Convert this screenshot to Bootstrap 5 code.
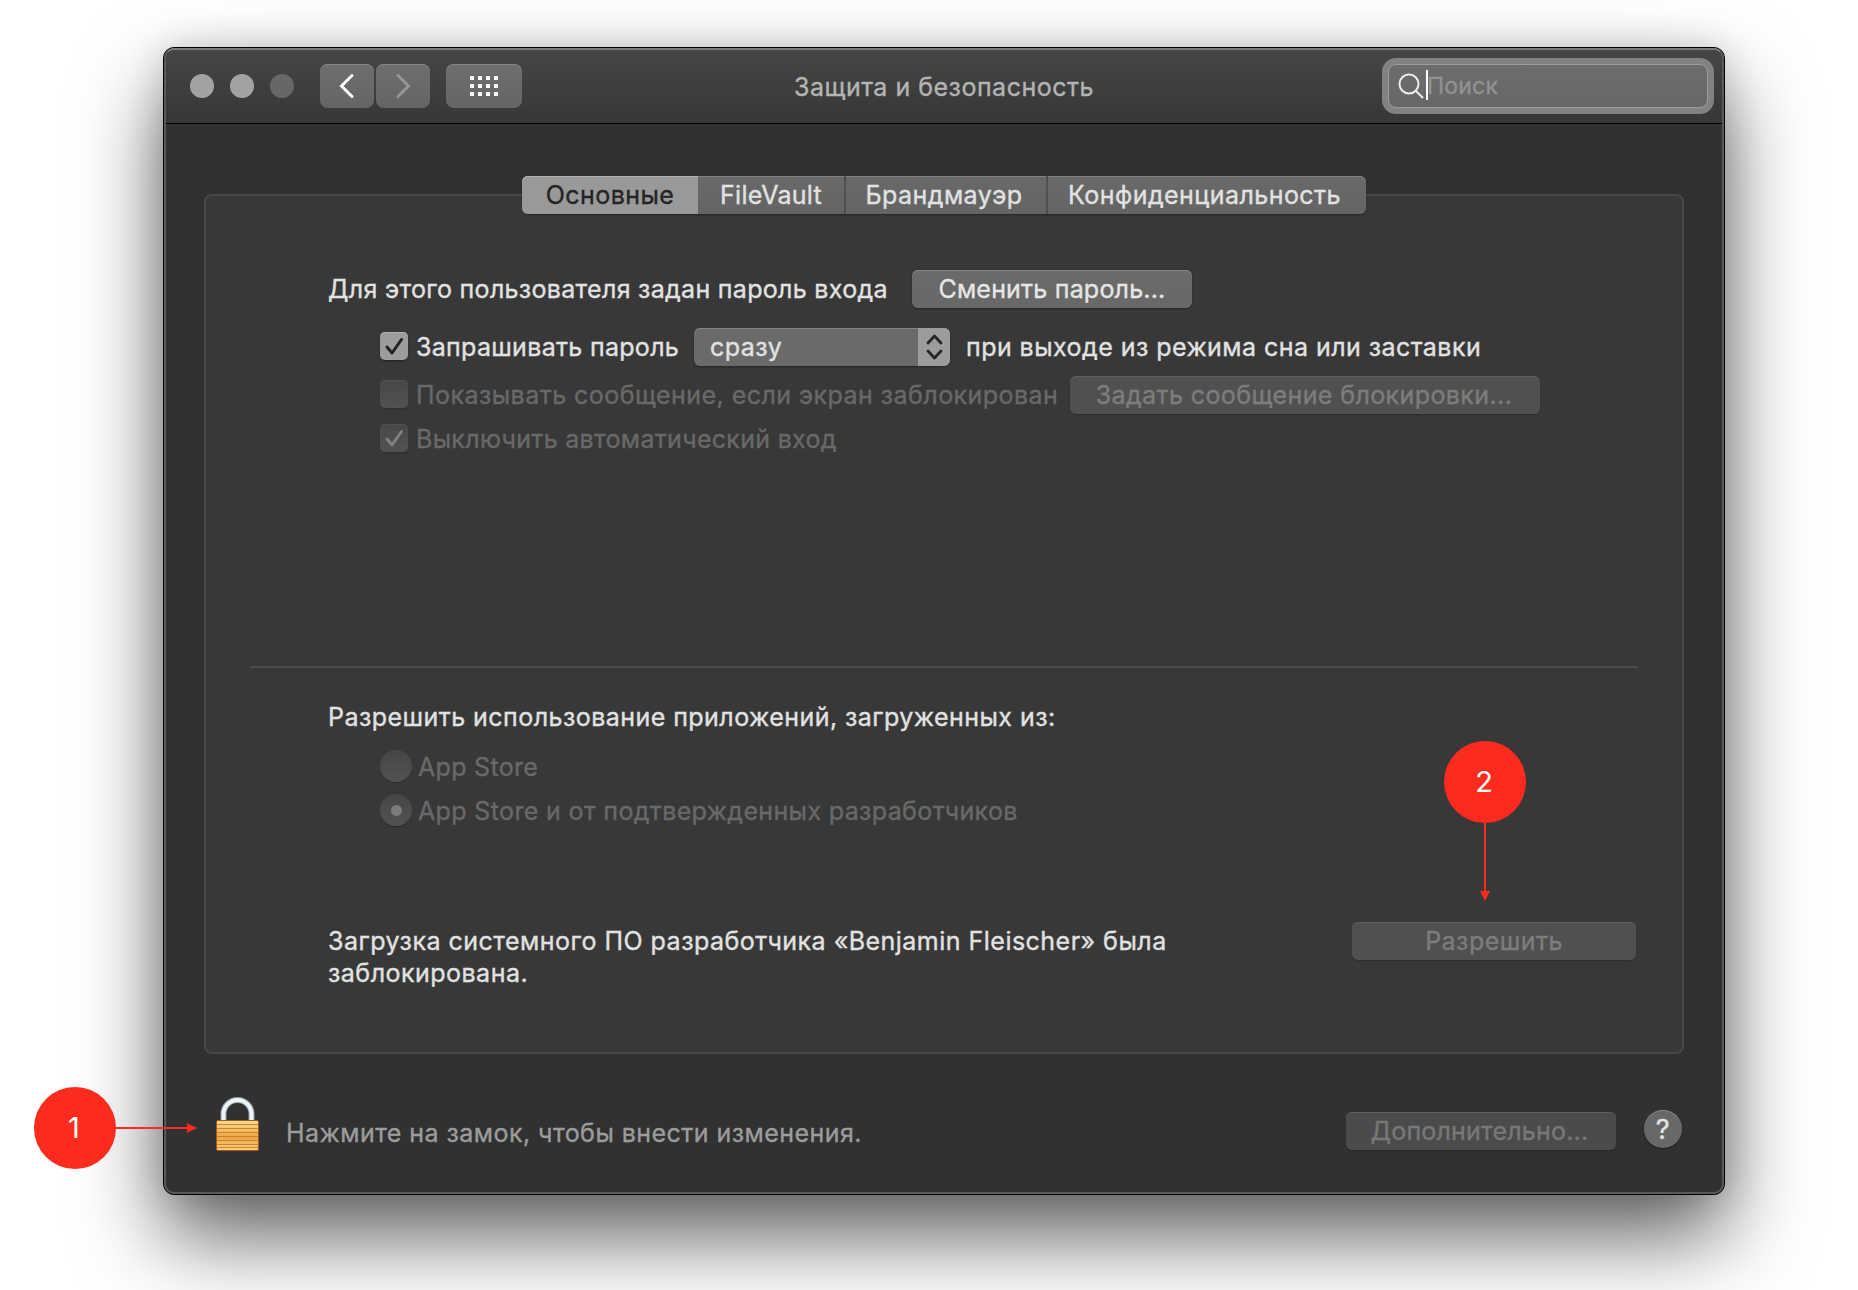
<!DOCTYPE html>
<html lang="ru">
<head>
<meta charset="utf-8">
<title>Защита и безопасность</title>
<link href="https://cdn.jsdelivr.net/npm/bootstrap@5.3.0/dist/css/bootstrap.min.css" rel="stylesheet">
<style>
html,body{width:1858px;height:1290px;overflow:hidden;background:#fff}
body{font-family:Inter,"Liberation Sans",sans-serif;font-size:25px;line-height:32px;color:#e2e2e2;letter-spacing:.45px;padding:47px 0 0 163px;position:relative;white-space:nowrap;-webkit-text-stroke:.35px}
svg{display:block}
.win{width:1562px;height:1148px;border:1px solid #000;border-radius:11px;background:#313131;position:relative;box-shadow:0 42px 84px rgba(0,0,0,.62),0 0 36px rgba(0,0,0,.14)}
.win::after{content:"";position:absolute;inset:0;border-radius:10px;border:2px solid #5a5a5a;border-top-color:#7b7b7b;pointer-events:none;z-index:3}
.titlebar{height:76px;background:linear-gradient(#464646,#373737);border-bottom:1px solid #000;border-radius:10px 10px 0 0;padding:10px 10px 10px 26px}
.side{width:480px}
.side.end{width:496px}
.dot{width:24px;height:24px;border-radius:50%;background:#a2a2a2}
.dot.off{background:#676767}
.tool{width:54px;height:44px;border-radius:8px;background:linear-gradient(#6e6e6e,#656565);box-shadow:inset 0 1px #858585;margin-left:2px}
.tool.first{margin-left:26px}
.tool.wide{width:76px;margin-left:16px}
.wtitle{color:#b4b4b4;padding-top:2px;letter-spacing:.5px}
.find{width:332px;height:56px;border-radius:14px;background:#828282;padding:6px}
.find>div{width:320px;height:44px;border:1px solid #9c9c9c;border-radius:8px;background:linear-gradient(#6d6d6d,#676767);padding-left:9px;color:#929292;font-size:23px;letter-spacing:.2px}
.caret{width:2px;height:30px;background:#fff;margin-left:2px;margin-top:-2px}
.find span{margin-left:-1px}
.panel{margin:70px 40px 0;height:860px;border:2px solid #474747;border-radius:8px;background:#383838}
.tabs{width:844px;height:38px;margin:-20px auto 0;border-radius:6px;background:linear-gradient(#696969,#646464);box-shadow:inset 0 1px #828282,0 1px 2px rgba(0,0,0,.35)}
.tabs>div{border-left:2px solid #505050;text-align:center;line-height:38px}
.tabs>div.on{border:0;width:176px;background:#999;color:#242424;border-radius:6px 0 0 6px;box-shadow:inset 0 1px #b2b2b2}
.tabs>.t2{width:146px;border-left:0;letter-spacing:.25px}
.tabs>.t3{width:202px;padding-right:4px}
.tabs>.t4{width:320px;padding-right:5px}
.pb{height:38px;line-height:38px;border-radius:6px;background:linear-gradient(#6a6a6a,#686868);box-shadow:inset 0 1px #838383,0 1px 2px rgba(0,0,0,.35);text-align:center;color:#e6e6e6}
.pb.off{background:#505050;color:#7d7d7d;box-shadow:inset 0 1px #5e5e5e,0 1px 1px rgba(0,0,0,.2)}
.ck{width:28px;height:28px;border-radius:5px;background:linear-gradient(#484848,#525252);box-shadow:0 1px 2px rgba(0,0,0,.2),inset 0 1px #505050;margin-right:8px;margin-bottom:2px}
.ck.on{background:#9c9c9c;box-shadow:inset 0 1px #b0b0b0,0 1px 2px rgba(0,0,0,.4)}
.rd{width:32px;height:32px;border-radius:50%;background:linear-gradient(#464646,#525252);margin-right:6px;box-shadow:0 1px 1px rgba(0,0,0,.2)}
.rd i{width:11px;height:11px;border-radius:50%;background:#7b7b7b}
.dim{color:#696969}
.snug{letter-spacing:.3px}
.r1{margin:56px 0 0 122px}
.r2{margin:20px 0 0 174px;height:38px}
.r3{margin:10px 0 0 174px;height:38px}
.r4{margin:10px 0 0 174px;height:30px}
.rule{height:2px;background:#4b4b4b;margin:212px 44px 0}
.h2t{margin:33px 0 0 122px}
.r5{margin:17px 0 0 174px;height:32px}
.r6{margin:12px 0 0 174px;height:32px;letter-spacing:.36px}
.r5 span,.r6 span{padding-top:2px}
.r7{margin:96px 46px 0 122px}
.note{padding-top:3px;letter-spacing:.48px}
.l1{width:584px}.l2{width:278px}.l3{width:654px}
.pop{width:256px;height:38px;border-radius:6px;background:#6a6a6a;box-shadow:inset 0 1px #838383,0 1px 2px rgba(0,0,0,.35);padding-left:16px;line-height:38px;margin-right:16px;overflow:hidden}
.step{width:32px;height:38px;background:#9c9c9c}
.w1{width:280px;letter-spacing:.2px}
.w2{width:470px;letter-spacing:.4px;padding-right:2px}
.w3{width:284px}
.w4{width:270px;letter-spacing:.2px;margin-top:58px;padding-right:3px}
.foot{padding:0 42px 0 52px}
.foot .pb.off{background:#4b4b4b;color:#787878}
.lock{margin-top:43px}
.hint{color:#9c9c9c;margin:63px 0 0 27px}
.help{width:38px;height:38px;border-radius:50%;background:#686868;box-shadow:inset 0 1px #838383,0 1px 2px rgba(0,0,0,.35);margin:56px 0 0 28px;line-height:39px;text-align:center;font-size:27px}
.pin{position:absolute;z-index:5}
.pin b{width:82px;height:82px;border-radius:50%;background:#fd2b1e;color:#fff;font-weight:400;font-size:29px;letter-spacing:0;padding-right:2px;-webkit-text-stroke:0}
.p1{left:34px;top:1087px}
.p2{left:1444px;top:741px}
</style>
</head>
<body>
<div class="win">
 <div class="titlebar d-flex align-items-center justify-content-between">
  <div class="side d-flex align-items-center">
   <div class="dot"></div><div class="dot ms-3"></div><div class="dot off ms-3"></div>
   <div class="tool first d-flex align-items-center justify-content-center"><svg width="16" height="26"><path d="M13 2.500L2.500 13L13 23.500" fill="none" stroke="#fff" stroke-width="3" stroke-linecap="round"/></svg></div>
   <div class="tool d-flex align-items-center justify-content-center"><svg width="16" height="26"><path d="M3 2.500L13.500 13L3 23.500" fill="none" stroke="#969696" stroke-width="3" stroke-linecap="round"/></svg></div>
   <div class="tool wide d-flex align-items-center justify-content-center"><svg width="28" height="20" fill="#fff"><path d="M0 0h4v4H0zM8 0h4v4H8zM16 0h4v4h-4zM24 0h4v4h-4zM0 8h4v4H0zM8 8h4v4H8zM16 8h4v4h-4zM24 8h4v4h-4zM0 16h4v4H0zM8 16h4v4H8zM16 16h4v4h-4zM24 16h4v4h-4z"/></svg></div>
  </div>
  <div class="wtitle">Защита и безопасность</div>
  <div class="side end d-flex justify-content-end"><div class="find"><div class="d-flex align-items-center"><svg width="26" height="26" fill="none" stroke="#eee" stroke-width="2"><circle cx="11" cy="11" r="9.500"/><path d="M17.500 17.500L25 25"/></svg><div class="caret"></div><span>Поиск</span></div></div></div>
 </div>
 <div class="panel">
  <div class="tabs d-flex"><div class="on">Основные</div><div class="t2">FileVault</div><div class="t3">Брандмауэр</div><div class="t4">Конфиденциальность</div></div>
  <div class="r1 d-flex align-items-center"><div class="l1 snug">Для этого пользователя задан пароль входа</div><div class="pb w1">Сменить пароль...</div></div>
  <div class="r2 d-flex align-items-center"><div class="ck on"><svg width="28" height="28"><path d="M7 15L12 21L21.500 7.500" fill="none" stroke="#222" stroke-width="3" stroke-linecap="round" stroke-linejoin="round"/></svg></div><div class="l2 snug">Запрашивать пароль</div><div class="pop d-flex justify-content-between"><span>сразу</span><div class="step"><svg width="32" height="38" fill="none" stroke="#262626" stroke-width="2.800" stroke-linecap="round" stroke-linejoin="round"><path d="M10 15L16.500 8L23 15M10 23L16.500 30L23 23"/></svg></div></div><span>при выходе из режима сна или заставки</span></div>
  <div class="r3 d-flex align-items-center dim"><div class="ck"></div><div class="l3">Показывать сообщение, если экран заблокирован</div><div class="pb off w2">Задать сообщение блокировки...</div></div>
  <div class="r4 d-flex align-items-center dim snug"><div class="ck"><svg width="28" height="28"><path d="M7 15L12 21L21.500 7.500" fill="none" stroke="#808080" stroke-width="3" stroke-linecap="round" stroke-linejoin="round"/></svg></div><span>Выключить автоматический вход</span></div>
  <div class="rule"></div>
  <div class="h2t">Разрешить использование приложений, загруженных из:</div>
  <div class="r5 d-flex align-items-center dim snug"><div class="rd"></div><span>App Store</span></div>
  <div class="r6 d-flex align-items-center dim"><div class="rd d-flex align-items-center justify-content-center"><i></i></div><span>App Store и от подтвержденных разработчиков</span></div>
  <div class="r7 d-flex justify-content-between"><div class="note">Загрузка системного ПО разработчика «Benjamin Fleischer» была<br>заблокирована.</div><div class="pb off w3">Разрешить</div></div>
 </div>
 <div class="foot d-flex align-items-start">
  <svg class="lock" width="43" height="56" viewBox="0 0 43 56"><defs><linearGradient id="g" x2="0" y2="1"><stop offset="0" stop-color="#ffdc90"/><stop offset=".55" stop-color="#eca647"/><stop offset="1" stop-color="#fdcf80"/></linearGradient></defs><path d="M7.500 24V17a14 14 0 0 1 28 0v7" fill="none" stroke="#8fa0ac" stroke-width="6"/><path d="M7.500 24V17a14 14 0 0 1 28 0v7" fill="none" stroke="#eef3f7" stroke-width="4"/><rect x=".5" y="23.500" width="42" height="30" rx="1.500" fill="url(#g)" stroke="#a35a18"/><path d="M1 27.500h41M1 31.500h41M1 35.500h41M1 39.500h41M1 43.500h41M1 47.500h41M1 50.500h41" stroke="#cb8430" stroke-width="1"/></svg>
  <div class="hint">Нажмите на замок, чтобы внести изменения.</div>
  <div class="pb off w4 ms-auto">Дополнительно...</div><div class="help">?</div>
 </div>
</div>
<div class="pin p1 d-flex align-items-center"><b class="d-flex align-items-center justify-content-center">1</b><svg width="81" height="10" fill="#fd2b1e"><path d="M0 4h71V0l10 5-10 5V6H0z"/></svg></div>
<div class="pin p2 d-flex flex-column align-items-center"><b class="d-flex align-items-center justify-content-center">2</b><svg width="10" height="78" fill="#fd2b1e"><path d="M4 0v68H0l5 10 5-10H6V0z"/></svg></div>
<script src="https://cdn.jsdelivr.net/npm/bootstrap@5.3.0/dist/js/bootstrap.bundle.min.js"></script>
</body>
</html>
